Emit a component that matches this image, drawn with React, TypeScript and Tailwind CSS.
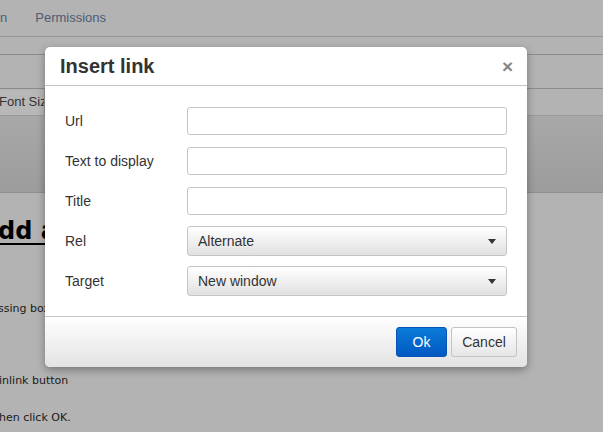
import React from "react";

const Caret = () => (
  <svg width="8" height="5" viewBox="0 0 8 5" className="shrink-0">
    <path d="M0 0 L8 0 L4 5 Z" fill="#333" />
  </svg>
);

const rows: { label: string; kind: "input" | "select"; value?: string }[] = [
  { label: "Url", kind: "input" },
  { label: "Text to display", kind: "input" },
  { label: "Title", kind: "input" },
  { label: "Rel", kind: "select", value: "Alternate" },
  { label: "Target", kind: "select", value: "New window" },
];

const InsertLinkDialog: React.FC = () => {
  return (
    <div className="absolute left-[45px] top-[47px] w-[482px] h-[320px] flex flex-col bg-white rounded-[5px] shadow-[0_3px_8px_rgba(0,0,0,0.35)] font-['Liberation_Sans',Arial,sans-serif] text-[#333]">
      <div className="h-[39px] shrink-0 flex items-center justify-between pl-[15px] pr-[14px] border-b border-[#c5c5c5]">
        <div className="text-[20px] font-bold text-[#333] leading-none">Insert link</div>
        <div className="text-[#858585] text-[19px] font-bold leading-none">×</div>
      </div>
      <div className="flex flex-col gap-[10px] px-[20px] pt-[20px] pb-[20px] border-b border-[#c5c5c5]">
        {rows.map((row, index) => (
          <div key={index} className="h-[30px] flex items-center">
            <div className="w-[122px] text-[14px] text-[#333]">{row.label}</div>
            {row.kind === "input" ? (
              <div className="w-[320px] h-[28px] bg-white border border-[#c5c5c5] rounded-[3px]" />
            ) : (
              <div className="w-[320px] h-[30px] flex items-center justify-between pl-[10px] pr-[10px] border border-[#c5c5c5] rounded-[3px] bg-gradient-to-b from-white to-[#e1e1e1] text-[14px] text-[#333]">
                <span>{row.value}</span>
                <Caret />
              </div>
            )}
          </div>
        ))}
      </div>
      <div className="flex-1 flex items-start justify-end gap-[4px] pt-[10px] pr-[10px] rounded-b-[5px] bg-gradient-to-b from-white to-[#e3e3e3]">
        <div className="w-[51px] h-[30px] flex items-center justify-center rounded-[3px] border border-[#0a53b4] bg-gradient-to-b from-[#0c7bd8] to-[#0358c1] text-white text-[14px]">
          Ok
        </div>
        <div className="w-[66px] h-[30px] flex items-center justify-center rounded-[3px] border border-[#c3c3c3] bg-gradient-to-b from-white to-[#e6e6e6] text-[#333] text-[14px]">
          Cancel
        </div>
      </div>
    </div>
  );
};

const App: React.FC = () => {
  return (
    <div className="relative w-[603px] h-[432px] overflow-hidden bg-[#b3b3b3] font-['DejaVu_Sans',Verdana,sans-serif]">
      <div className="h-[37px] flex items-center gap-[28px] border-b border-[#979797] font-['Liberation_Sans',Arial,sans-serif] text-[13px] text-[#4c5d73]">
        <span>n</span>
        <span>Permissions</span>
      </div>
      <div className="h-[18px] border-b border-[#8c8c8c]" />
      <div className="h-[34px] border-b border-[#8c8c8c]" />
      <div className="h-[27px] flex items-center border-b border-[#9a9a9a]">
        <div className="h-[25px] w-[45px] shrink-0 flex items-center bg-[#b8b8b8] border-r border-[#9a9a9a] overflow-hidden whitespace-nowrap font-['Liberation_Sans',Arial,sans-serif] text-[13px] text-[#333]">
          <span className="-ml-[1px]">Font Size</span>
        </div>
      </div>
      <div className="h-[77px] border-b border-[#8f8f8f] bg-gradient-to-b from-[#a8a8a8] to-[#9c9c9c]" />
      <div className="pt-[24px] text-[24px] font-bold text-black leading-[28px] whitespace-nowrap">
        <span className="underline decoration-[2px] underline-offset-[4px] -ml-[2px]">dd a link</span>
      </div>
      <div className="mt-[56px] text-[11px] text-[#1a1a1a] whitespace-nowrap -ml-[2px]">ssing box</div>
      <div className="mt-[55px] text-[11px] text-[#1a1a1a] whitespace-nowrap -ml-[1px]">inlink button</div>
      <div className="mt-[21px] text-[11px] text-[#1a1a1a] whitespace-nowrap -ml-[1px]">hen click OK.</div>
      <InsertLinkDialog />
    </div>
  );
};

export default App;
